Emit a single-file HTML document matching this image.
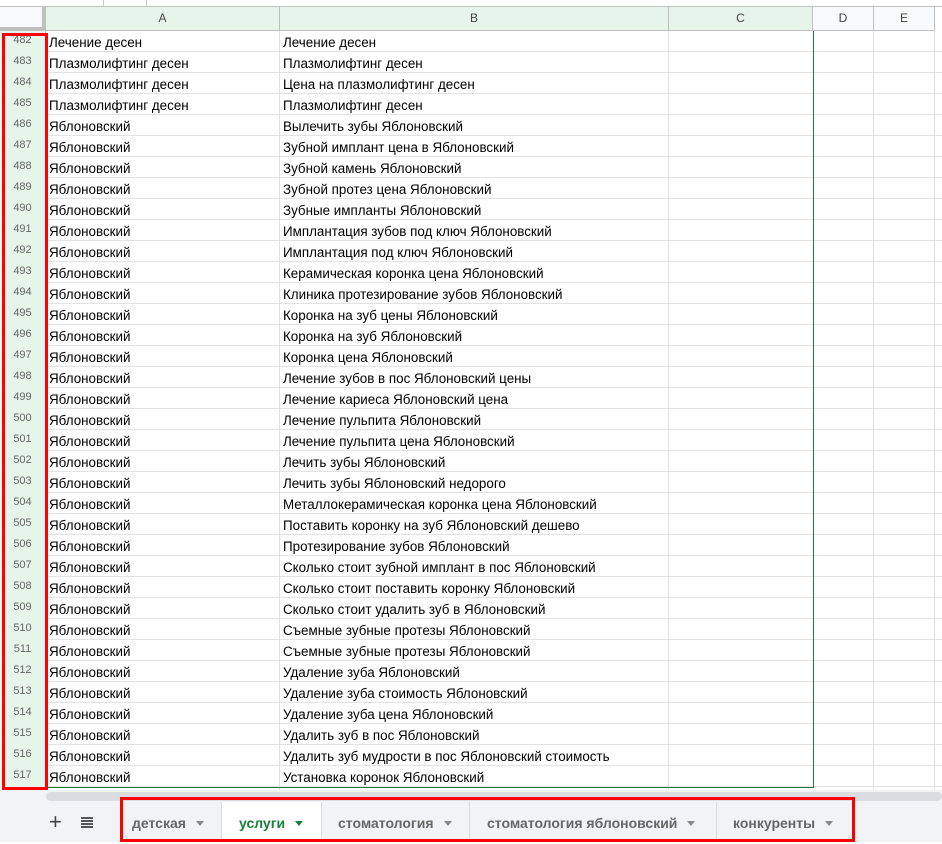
<!DOCTYPE html>
<html><head><meta charset="utf-8"><style>
*{margin:0;padding:0;box-sizing:border-box}
body{width:942px;height:842px;overflow:hidden;background:#fff;font-family:"Liberation Sans",Arial,sans-serif;position:relative}
.a{position:absolute}
.hd{position:absolute;top:7px;height:24px;border-right:1px solid #c0c0c0;border-bottom:1px solid #c0c0c0;font-size:12px;color:#444;text-align:center;line-height:23px}
.r{position:absolute;left:0;width:942px;height:21px;border-bottom:1px solid #e2e2e2}
.n{position:absolute;left:0;width:46px;height:21px;background:#e6f4ea;border-right:1px solid #c0c0c0;font-size:11px;color:#666;text-align:center;line-height:19px}
.c{position:absolute;top:0;height:21px;font-size:13.4px;color:#000;line-height:24px;padding-left:3px;white-space:nowrap;overflow:hidden}
.v{position:absolute;top:31px;height:759px;width:1px;background:#e2e2e2}
.tab{position:absolute;top:802px;height:40px;font-size:14px;font-weight:bold;color:#666;line-height:42px;padding-left:12px;border-right:1px solid #dadce0}
.tab i{display:inline-block;width:0;height:0;border-left:4px solid transparent;border-right:4px solid transparent;border-top:5px solid #888;margin-left:10px;vertical-align:2px}
</style></head><body>
<div class="a" style="left:0;top:0;width:942px;height:7px;background:#fff;border-bottom:1px solid #c0c0c0"></div>
<div class="a" style="left:103px;top:0;width:1px;height:6px;background:#ccc"></div>
<div class="a" style="left:146px;top:0;width:1px;height:6px;background:#ccc"></div>
<div class="hd" style="left:0;width:46px;background:#f8f9fa;border-right:4px solid #c0c0c0;border-bottom:4px solid #c0c0c0"></div>
<div class="hd" style="left:46px;width:234px;background:#e6f4ea">A</div>
<div class="hd" style="left:280px;width:389px;background:#e6f4ea">B</div>
<div class="hd" style="left:669px;width:144px;background:#e6f4ea">C</div>
<div class="hd" style="left:813px;width:61px;background:#f8f9fa">D</div>
<div class="hd" style="left:874px;width:61px;background:#f8f9fa">E</div>
<div class="v" style="left:279px"></div><div class="v" style="left:668px"></div><div class="v" style="left:873px"></div><div class="v" style="left:934px"></div>
<div id="rows"></div>
<script>
var d=[["482","Лечение десен","Лечение десен"],["483","Плазмолифтинг десен","Плазмолифтинг десен"],["484","Плазмолифтинг десен","Цена на плазмолифтинг десен"],["485","Плазмолифтинг десен","Плазмолифтинг десен"],
["486","","Вылечить зубы Яблоновский"],["487","","Зубной имплант цена в Яблоновский"],["488","","Зубной камень Яблоновский"],["489","","Зубной протез цена Яблоновский"],["490","","Зубные импланты Яблоновский"],["491","","Имплантация зубов под ключ Яблоновский"],["492","","Имплантация под ключ Яблоновский"],["493","","Керамическая коронка цена Яблоновский"],["494","","Клиника протезирование зубов Яблоновский"],["495","","Коронка на зуб цены Яблоновский"],["496","","Коронка на зуб Яблоновский"],["497","","Коронка цена Яблоновский"],["498","","Лечение зубов в пос Яблоновский цены"],["499","","Лечение кариеса Яблоновский цена"],["500","","Лечение пульпита Яблоновский"],["501","","Лечение пульпита цена Яблоновский"],["502","","Лечить зубы Яблоновский"],["503","","Лечить зубы Яблоновский недорого"],["504","","Металлокерамическая коронка цена Яблоновский"],["505","","Поставить коронку на зуб Яблоновский дешево"],["506","","Протезирование зубов Яблоновский"],["507","","Сколько стоит зубной имплант в пос Яблоновский"],["508","","Сколько стоит поставить коронку Яблоновский"],["509","","Сколько стоит удалить зуб в Яблоновский"],["510","","Съемные зубные протезы Яблоновский"],["511","","Съемные зубные протезы Яблоновский"],["512","","Удаление зуба Яблоновский"],["513","","Удаление зуба стоимость Яблоновский"],["514","","Удаление зуба цена Яблоновский"],["515","","Удалить зуб в пос Яблоновский"],["516","","Удалить зуб мудрости в пос Яблоновский стоимость"],["517","","Установка коронок Яблоновский"]];
var h="";d.forEach(function(r,i){h+='<div class="r" style="top:'+(31+i*21)+'px"><div class="n">'+r[0]+'</div><div class="c" style="left:46px;width:234px">'+(r[1]||"Яблоновский")+'</div><div class="c" style="left:280px;width:389px">'+r[2]+'</div></div>';});
document.getElementById("rows").innerHTML=h;
</script>
<div class="a" style="left:46px;top:31px;width:768px;height:757px;border:1px solid #188038;border-top:none;border-left:none"></div>
<div class="a" style="left:2px;top:33px;width:46px;height:757px;border:3px solid #f00"></div>
<div class="a" style="left:0;top:790px;width:942px;height:52px;background:#f1f3f4"></div>
<div class="a" style="left:46px;top:792px;width:896px;height:9px;background:#dadce0;border-radius:5px"></div>
<div class="a" style="left:49px;top:808px;font-size:22px;color:#444;line-height:28px">+</div>
<div class="a" style="left:81px;top:817px;width:12px;height:2px;background:#555;box-shadow:0 3px 0 #555,0 6px 0 #555,0 9px 0 #555"></div>
<div class="tab" style="left:122px;width:100px;padding-left:10px">детская<i></i></div>
<div class="tab" style="left:222px;width:100px;background:#fff;color:#188038;padding-left:17px">услуги<i style="border-top-color:#188038"></i></div>
<div class="tab" style="left:322px;width:148px;padding-left:16px">стоматология<i></i></div>
<div class="tab" style="left:470px;width:247px;padding-left:17px">стоматология яблоновский<i></i></div>
<div class="tab" style="left:717px;width:135px;padding-left:16px;border:none">конкуренты<i></i></div>
<div class="a" style="left:120px;top:797px;width:735px;height:45px;border:3px solid #f00"></div>
</body></html>
